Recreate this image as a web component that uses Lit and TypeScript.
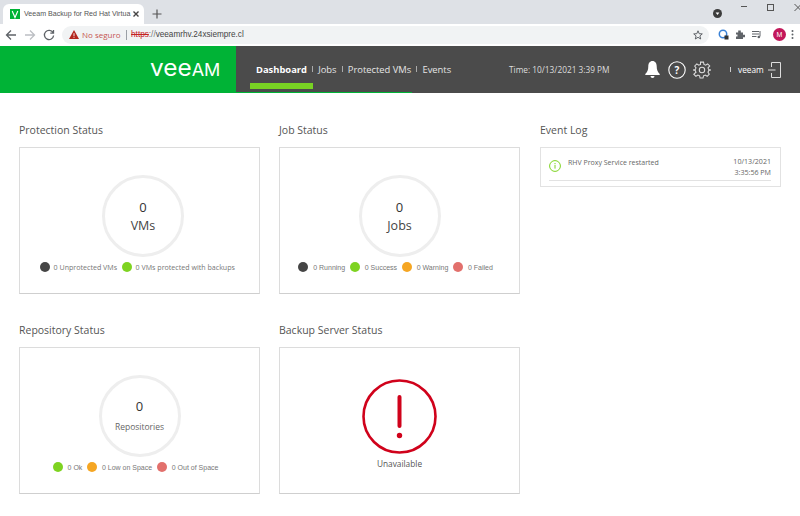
import { LitElement, css, html } from 'lit';
import { customElement } from 'lit/decorators.js';

const DARK = '#454545';
const GREEN = '#7ed321';
const ORANGE = '#f5a623';
const RED = '#e2706c';

type Legend = { color: string, label: string };

@customElement('app-root')
export class AppRoot extends LitElement {
  private renderChrome() {
    return html`
      <div class="tabbar">
        <div class="tab">
          <span class="favicon">
            <svg width="10" height="10" viewBox="0 0 10 10"><path d="M2.2 2 5 8.500 7.800 2" fill="none" stroke="#fff" stroke-width="1.1"/></svg>
          </span>
          <span class="tab-title">Veeam Backup for Red Hat Virtua</span>
          <svg class="tab-x" width="8" height="8" viewBox="0 0 8 8"><path d="M1.5 1.5 6.500 6.500M6.500 1.500 1.500 6.500" stroke="#444" stroke-width="1.4"/></svg>
        </div>
        <svg class="plus" width="10" height="10" viewBox="0 0 10 10"><path d="M5 .5v9M.5 5h9" stroke="#555" stroke-width="1.2"/></svg>
        <span class="spacer"></span>
        <span class="media"><svg width="9" height="9" viewBox="0 0 9 9"><circle cx="4.5" cy="4.5" r="4.5" fill="#3c3c3c"/><path d="M2.6 3.6h3.800L4.500 6z" fill="#fff"/></svg></span>
        <div class="win">
          <svg width="10" height="10" viewBox="0 0 10 10"><path d="M1 3.500h6" stroke="#555"/></svg>
          <svg width="10" height="10" viewBox="0 0 10 10"><rect x=".5" y="1.500" width="6" height="6" fill="none" stroke="#555"/></svg>
          <svg width="10" height="10" viewBox="0 0 10 10"><path d="M.5 1l7 7M7.500 1l-7 7" stroke="#555"/></svg>
        </div>
      </div>
      <div class="toolbar">
        <svg class="nav" width="12" height="12" viewBox="0 0 12 12"><path d="M11 6H2M6 1.500 1.500 6 6 10.500" fill="none" stroke="#5f6368" stroke-width="1.3"/></svg>
        <svg class="nav" width="12" height="12" viewBox="0 0 12 12"><path d="M1 6h9M6 1.500 10.500 6 6 10.500" fill="none" stroke="#bcbfc3" stroke-width="1.3"/></svg>
        <svg class="nav" width="12" height="12" viewBox="0 0 12 12"><path d="M10 3.600A4.600 4.600 0 1 0 10.600 6.500M10.500 1v3.200H7.300" fill="none" stroke="#5f6368" stroke-width="1.3"/></svg>
        <div class="omnibox">
          <svg width="10" height="9" viewBox="0 0 10 9"><path d="M5 0 10 9H0z" fill="#b3261e"/><path d="M5 3.200v2.800M5 6.700v1.100" stroke="#fff" stroke-width=".9"/></svg>
          <span class="unsafe">No seguro</span>
          <span class="pipe"></span>
          <span class="url"><s>https</s><span class="url-sep">://</span>veeamrhv.24xsiempre.cl</span>
          <span class="spacer"></span>
          <svg width="10" height="10" viewBox="0 0 10 10"><path d="M5 .8 6.200 3.700 9.300 3.900 6.900 5.900 7.700 9 5 7.300 2.300 9 3.100 5.900.7 3.900 3.800 3.700z" fill="none" stroke="#5f6368"/></svg>
        </div>
        <div class="ext">
          <svg width="11" height="11" viewBox="0 0 11 11"><circle cx="5" cy="5" r="3.700" fill="none" stroke="#3b82d6" stroke-width="1.5"/><rect x="6.500" y="6.500" width="4" height="4" fill="#333"/></svg>
          <svg width="11" height="11" viewBox="0 0 11 11"><path d="M1 3.500h2.200V1.500h2.600v2H8v2.200h2v2.600H8V10H1V7.500h1.500V5.500H1z" fill="#5f6368"/></svg>
          <svg width="11" height="11" viewBox="0 0 11 11"><path d="M0 2.500h7M0 5h7M0 7.500h4.500M8 2v5.500" fill="none" stroke="#5f6368"/><circle cx="6.800" cy="8" r="1.300" fill="#5f6368"/></svg>
          <span class="avatar">M</span>
          <svg width="3" height="11" viewBox="0 0 3 11"><circle cx="1.500" cy="2" r="1" fill="#5f6368"/><circle cx="1.500" cy="5.500" r="1" fill="#5f6368"/><circle cx="1.500" cy="9" r="1" fill="#5f6368"/></svg>
        </div>
      </div>
    `;
  }

  private renderHeader() {
    return html`
      <header>
        <div class="brand"><span class="logo"><span class="logo-low">vee</span><span class="logo-up">AM</span></span></div>
        <div class="bar">
          <nav>
            <a class="active">Dashboard</a><i></i>
            <a>Jobs</a><i></i>
            <a>Protected VMs</a><i></i>
            <a>Events</a>
          </nav>
          <span class="time">Time: 10/13/2021 3:39 PM</span>
          <svg class="bell" width="15" height="19" viewBox="0 0 15 19"><path d="M7.500 1C4.800 1 3.300 3.300 3.300 6.300c0 3.700-1 5.600-3 7.700v1h14.400v-1c-2-2.100-3-4-3-7.700C11.700 3.300 10.200 1 7.500 1z" fill="#fff"/><path d="M5.500 16h4a2 2 0 0 1-4 0z" fill="#fff"/></svg>
          <svg class="help" width="18" height="18" viewBox="0 0 18 18"><circle cx="9" cy="9" r="8.200" fill="none" stroke="#fff" stroke-width="1.100"/><text x="9" y="12.500" text-anchor="middle" font-size="10" font-weight="700" fill="#fff" font-family="Open Sans, sans-serif">?</text></svg>
          <svg class="gear" width="18" height="18" viewBox="0 0 24 24"><path d="M10 1.500h4l.6 3 2.300 1 2.600-1.700 2.800 2.800L20 9.200l1 2.300 3 .6v0l-3 .6-1 2.300 1.700 2.600-2.800 2.800-2.600-1.700-2.300 1-.6 3h-4l-.6-3-2.300-1-2.600 1.700-2.800-2.800L4 15l-1-2.300-3-.6v0l3-.6 1-2.300-1.700-2.600 2.800-2.800 2.600 1.700 2.300-1z" fill="none" stroke="#ddd" stroke-width="1.400"/><circle cx="12" cy="12" r="3.600" fill="none" stroke="#ddd" stroke-width="1.400"/></svg>
          <i class="user-sep"></i>
          <span class="user">veeam</span>
          <svg class="logout" width="13" height="16" viewBox="0 0 13 16"><path d="M3.500 5V.5h9v15h-9V11M0 8h7.500" fill="none" stroke="#ddd"/></svg>
        </div>
      </header>
    `;
  }

  private renderLegend(items: Legend[], narrow = false) {
    return html`
      <div class=${narrow ? 'legend narrow' : 'legend'}>
        ${items.map(item => html`
          <span class="dot" style="background:${item.color}"></span>
          <span class="legend-label">${item.label}</span>
        `)}
      </div>
    `;
  }

  private renderRing(label: string, small = false, shifted = false) {
    return html`
      <div class=${shifted ? 'ring shifted' : 'ring'}>
        <span class="count">0</span>
        <span class=${small ? 'unit small' : 'unit'}>${label}</span>
      </div>
    `;
  }

  render() {
    return html`
      ${this.renderChrome()}
      ${this.renderHeader()}
      <main>
        <section>
          <h2>Protection Status</h2>
          <div class="card">
            ${this.renderRing('VMs', false, true)}
            ${this.renderLegend([
              { color: DARK, label: '0 Unprotected VMs' },
              { color: GREEN, label: '0 VMs protected with backups' },
            ])}
          </div>
        </section>
        <section>
          <h2>Job Status</h2>
          <div class="card">
            ${this.renderRing('Jobs')}
            ${this.renderLegend([
              { color: DARK, label: '0 Running' },
              { color: GREEN, label: '0 Success' },
              { color: ORANGE, label: '0 Warning' },
              { color: RED, label: '0 Failed' },
            ], true)}
          </div>
        </section>
        <section>
          <h2>Event Log</h2>
          <div class="log">
            <div class="log-row">
              <svg class="log-icon" width="12" height="12" viewBox="0 0 12 12"><circle cx="6" cy="6" r="5.400" fill="none" stroke="${GREEN}"/><path d="M6 5v3.600M6 3v1.200" stroke="${GREEN}"/></svg>
              <span class="log-text">RHV Proxy Service restarted</span>
              <span class="log-date">10/13/2021<br>3:35:56 PM</span>
            </div>
          </div>
        </section>
        <section>
          <h2>Repository Status</h2>
          <div class="card">
            ${this.renderRing('Repositories', true)}
            ${this.renderLegend([
              { color: GREEN, label: '0 Ok' },
              { color: ORANGE, label: '0 Low on Space' },
              { color: RED, label: '0 Out of Space' },
            ], true)}
          </div>
        </section>
        <section>
          <h2>Backup Server Status</h2>
          <div class="card server">
            <svg width="75" height="75" viewBox="0 0 75 75">
              <circle cx="37.500" cy="37.500" r="36" fill="none" stroke="#d0021b" stroke-width="2.600"/>
              <path d="M37.500 18v29" stroke="#d0021b" stroke-width="4" stroke-linecap="round"/>
              <circle cx="37.500" cy="56.500" r="2.700" fill="#d0021b"/>
            </svg>
            <span class="unavailable">Unavailable</span>
          </div>
        </section>
      </main>
    `;
  }

  static styles = css`
    :host {
      display: block;
      width: 800px;
      height: 516px;
      overflow: hidden;
      background: #fff;
      font-family: "Open Sans", sans-serif;
    }

    .tabbar {
      display: flex;
      align-items: flex-end;
      height: 24px;
      background: #dee1e6;
    }
    .tab {
      display: flex;
      align-items: center;
      width: 141px;
      height: 20px;
      margin-left: 3px;
      padding-left: 7px;
      box-sizing: border-box;
      background: #fff;
      border-radius: 6px 6px 0 0;
    }
    .favicon {
      display: flex;
      align-items: center;
      justify-content: center;
      width: 10px;
      height: 10px;
      background: #00b336;
      flex: none;
      overflow: hidden;
    }
    .tab-title {
      width: 106px;
      margin-left: 4px;
      font-size: 7.1px;
      font-family: "Liberation Sans", sans-serif;
      color: #555;
      white-space: nowrap;
    }
    .tab-x { margin-left: 2px; }
    .plus { margin: 0 0 5px 8px; }
    .spacer { flex: 1; }
    .media { margin-bottom: 6px; line-height: 0; }
    .win {
      display: flex;
      gap: 17px;
      align-self: flex-start;
      margin: 3px -4px 0 18.5px;
    }

    .toolbar {
      display: flex;
      align-items: center;
      height: 21px;
      padding-left: 5px;
      background: #fff;
    }
    .nav { margin-right: 7px; }
    .omnibox {
      display: flex;
      align-items: center;
      flex: none;
      width: 647px;
      height: 18px;
      padding: 0 6px 0 7px;
      box-sizing: border-box;
      background: #f1f3f4;
      border-radius: 9px;
    }
    .unsafe {
      margin-left: 3px;
      font: 8px "Open Sans", sans-serif;
      color: #c5554f;
    }
    .pipe {
      width: 1px;
      height: 10px;
      margin: 0 4.5px 0 5px;
      background: #9aa0a6;
    }
    .url {
      font: 8.2px "Liberation Sans", sans-serif;
      color: #444;
    }
    .url s { color: #c5221f; }
    .url-sep { color: #777; }
    .ext {
      display: flex;
      align-items: center;
      gap: 6px;
      margin-left: 9px;
    }
    .avatar {
      display: flex;
      align-items: center;
      justify-content: center;
      width: 13px;
      height: 13px;
      margin: 0 -1px 0 4px;
      border-radius: 50%;
      background: #c2185b;
      color: #fff;
      font: 7px "Liberation Sans", sans-serif;
    }

    header {
      display: flex;
      height: 47px;
      margin-top: 1px;
    }
    .brand {
      display: flex;
      align-items: center;
      flex: none;
      width: 236px;
      padding-left: 150px;
      box-sizing: border-box;
      background: #00b336;
    }
    .logo {
      display: inline-block;
      margin-bottom: 3px;
      color: #fff;
      font-family: "Inter", sans-serif;
      font-weight: 400;
      line-height: 1;
      white-space: nowrap;
      transform: scaleX(1.06);
      transform-origin: left center;
    }
    .logo-low { font-size: 23px; }
    .logo-up { font-size: 17px; }
    .bar {
      position: relative;
      display: flex;
      align-items: center;
      flex: 1;
      background: #4b4b4b;
      color: #fff;
    }
    .bar::before {
      content: '';
      position: absolute;
      left: 0;
      bottom: 0;
      width: 176px;
      height: 1px;
      background: #00b336;
    }
    nav {
      display: flex;
      align-items: center;
      flex: none;
      margin: 0 0 1px 20px;
      width: 253px;
      font-size: 9.4px;
      color: #e4e4e4;
    }
    nav i {
      width: 1px;
      height: 6px;
      margin: 0 5.1px;
      background: #aaa;
    }
    nav a.active {
      position: relative;
      font-weight: 700;
      color: #fff;
    }
    nav a.active::after {
      content: '';
      position: absolute;
      left: -6px;
      right: -6px;
      top: 20px;
      height: 6px;
      background: #78d223;
    }
    .time {
      flex: none;
      width: 136px;
      font-size: 8.3px;
      color: #ddd;
    }
    .help { margin-left: 8px; }
    .gear { margin-left: 7px; }
    .user-sep {
      width: 1px;
      height: 5px;
      margin: 0 7px 0 19px;
      background: #ccc;
    }
    .user { font-size: 8.3px; }
    .logout { margin-left: 4px; }

    main {
      display: grid;
      grid-template-columns: 260px 261px 241px;
      grid-auto-rows: 200px;
      padding: 29px 0 0 19px;
    }
    section { min-width: 0; }
    h2 {
      margin: 0 0 8px;
      height: 17px;
      font-size: 10.5px;
      font-weight: 400;
      line-height: 17px;
      color: #555;
    }
    .card {
      display: flex;
      flex-direction: column;
      align-items: center;
      width: 241px;
      height: 147px;
      box-sizing: border-box;
      padding-top: 27px;
      border: 1px solid #dcdcdc;
      border-bottom-color: #cfcfcf;
    }
    .ring {
      display: flex;
      flex-direction: column;
      align-items: center;
      justify-content: center;
      width: 82px;
      height: 82px;
      box-sizing: border-box;
      border: 3.5px solid #eeeeee;
      border-radius: 50%;
    }
    .ring.shifted { margin-left: 7px; }
    .count {
      font-size: 13px;
      line-height: 19px;
      color: #333;
    }
    .unit {
      font-size: 12.5px;
      line-height: 18px;
      color: #444;
    }
    .unit.small {
      margin-top: 2px;
      font-size: 8.5px;
      color: #666;
    }
    .legend {
      display: flex;
      align-items: center;
      margin-top: 4px;
      height: 12px;
    }
    .legend.narrow { padding-right: 3px; }
    .dot {
      flex: none;
      width: 10px;
      height: 10px;
      border-radius: 50%;
    }
    .legend-label {
      margin: 0 4.5px 0 4px;
      font-size: 7.1px;
      color: #777;
      white-space: nowrap;
    }
    .narrow .legend-label {
      margin: 0 4.8px;
      font-family: "Liberation Sans", sans-serif;
      font-size: 7px;
    }

    .log {
      height: 40px;
      box-sizing: border-box;
      padding: 0 9px 0 8px;
      border: 1px solid #e2e2e2;
    }
    .log-row {
      display: flex;
      align-items: flex-start;
      height: 32px;
      border-bottom: 1px solid #e2e2e2;
    }
    .log-icon { margin-top: 12px; flex: none; }
    .log-text {
      flex: 1;
      margin: 10px 0 0 7px;
      font-size: 7px;
      line-height: 10px;
      color: #666;
    }
    .log-date {
      margin-top: 8px;
      font-size: 7.1px;
      line-height: 10.5px;
      text-align: right;
      color: #666;
    }

    .server { padding-top: 31px; }
    .unavailable {
      margin-top: 4px;
      font-size: 8.3px;
      color: #555;
    }
  `;
}
